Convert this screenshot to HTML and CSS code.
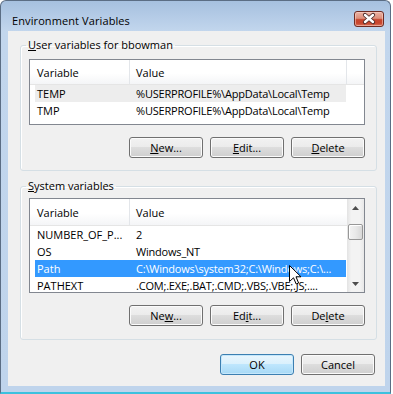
FILE: index.html
```html
<!DOCTYPE html>
<html>
<head>
<meta charset="utf-8">
<link rel="stylesheet" href="styles.css">
</head>
<body>
<div class="window">
  <div class="titlebar">
    <span class="title">Environment Variables</span>
    <div class="close">
      <svg width="30" height="16" viewBox="0 0 30 16">
        <path d="M11 4 L19 11 M19 4 L11 11" stroke="#4a2a28" stroke-width="4.2" stroke-linecap="round"/>
        <path d="M11 4 L19 11 M19 4 L11 11" stroke="#ffffff" stroke-width="2.4" stroke-linecap="round"/>
      </svg>
    </div>
  </div>
  <div class="client">
    <fieldset class="group group-user">
      <legend><u>U</u>ser variables for bbowman</legend>
      <div class="list list-user">
        <div class="list-main">
          <div class="list-head">
            <div class="hcell h1">Variable</div>
            <div class="hcell h2">Value</div>
            <div class="hfill"></div>
          </div>
          <div class="row row-hot"><span class="c1">TEMP</span><span class="c2">%USERPROFILE%\AppData\Local\Temp</span></div>
          <div class="row"><span class="c1">TMP</span><span class="c2">%USERPROFILE%\AppData\Local\Temp</span></div>
        </div>
      </div>
      <div class="buttons">
        <button class="btn"><u>N</u>ew...</button>
        <button class="btn"><u>E</u>dit...</button>
        <button class="btn"><u>D</u>elete</button>
      </div>
    </fieldset>
    <fieldset class="group group-system">
      <legend><u>S</u>ystem variables</legend>
      <div class="list list-system">
        <div class="list-main">
          <div class="list-head head-tall">
            <div class="hcell h1">Variable</div>
            <div class="hcell h2 h2-last">Value</div>
          </div>
          <div class="row"><span class="c1">NUMBER_OF_P...</span><span class="c2">2</span></div>
          <div class="row"><span class="c1">OS</span><span class="c2">Windows_NT</span></div>
          <div class="row row-selected"><span class="c1">Path</span><span class="c2">C:\Windows\system32;C:\Windows;C:\...</span></div>
          <div class="row"><span class="c1">PATHEXT</span><span class="c2">.COM;.EXE;.BAT;.CMD;.VBS;.VBE;.JS;....</span></div>
        </div>
        <div class="scrollbar">
          <div class="sb-arrow">
            <svg width="7" height="4" viewBox="0 0 7 4"><polygon points="0,4 3.5,0 7,4" fill="#4d4d4d"/></svg>
          </div>
          <div class="sb-thumb"></div>
          <div class="sb-track"></div>
          <div class="sb-arrow">
            <svg width="7" height="4" viewBox="0 0 7 4"><polygon points="0,0 7,0 3.5,4" fill="#4d4d4d"/></svg>
          </div>
        </div>
      </div>
      <div class="buttons">
        <button class="btn">Ne<u>w</u>...</button>
        <button class="btn">Ed<u>i</u>t...</button>
        <button class="btn">De<u>l</u>ete</button>
      </div>
    </fieldset>
    <div class="dialog-buttons">
      <button class="btn btn-default">OK</button>
      <button class="btn">Cancel</button>
    </div>
    <svg class="cursor" width="13" height="20" viewBox="0 0 13 20">
      <path d="M0.5 0.5 L0.5 16.5 L4.5 12.8 L7.2 19 L9.6 18 L7 11.8 L12 11.8 Z" fill="#ffffff" stroke="#000000" stroke-width="1" stroke-linejoin="miter"/>
    </svg>
  </div>
</div>
</body>
</html>
```

FILE: styles.css
```css
html, body {
  margin: 0;
  padding: 0;
  background: #ffffff;
}

body {
  font-family: "Segoe UI", "Open Sans", sans-serif;
  font-size: 11px;
  color: #000000;
}

.window {
  position: relative;
  width: 391px;
  height: 394px;
  box-sizing: border-box;
  border: 1px solid #5b6d84;
  border-bottom: 2px solid #3cc1de;
  border-radius: 6px 6px 0 0;
  background: linear-gradient(#a6c0df 0px, #c2d6ed 30px, #bfd4ec 100%);
  padding: 0 5px 6px 7px;
  display: flex;
  flex-direction: column;
}

.titlebar {
  height: 30px;
  flex: none;
  display: flex;
  align-items: flex-start;
  justify-content: space-between;
  padding-left: 4px;
}

.title {
  margin-top: 12px;
  font-size: 11px;
  line-height: 15px;
  letter-spacing: 0.1px;
}

.close {
  margin-top: 10px;
  margin-right: 1px;
  width: 30px;
  height: 16px;
  box-sizing: border-box;
  border: 1px solid #6e2b22;
  border-radius: 3px;
  background: linear-gradient(#eab2a4 0%, #dd8f7b 45%, #c6452d 55%, #c8462e 80%, #d9745c 100%);
  box-shadow: inset 0 0 0 1px rgba(255, 220, 210, 0.5);
  display: flex;
}

.close svg {
  margin: -1px;
}

.client {
  position: relative;
  flex: none;
  height: 355px;
  background: #f0f0f0;
  display: flex;
  flex-direction: column;
}

.group {
  margin: 0 8px 0 12px;
  border: 1px solid #d5dfe5;
  border-radius: 3px;
  min-width: 0;
  box-shadow: inset 1px 1px 0 #ffffff;
}

.group-user {
  margin-top: 7px;
  padding: 7px 11px 12px 8px;
}

.group-system {
  margin-top: 8px;
  padding: 5px 11px 13px 8px;
}

legend {
  padding: 0 2px;
  margin-left: -3px;
  line-height: 14px;
}

.list {
  box-sizing: border-box;
  border: 1px solid #828790;
  background: #ffffff;
  display: flex;
  overflow: hidden;
}

.list-user {
  height: 66px;
}

.list-system {
  height: 95px;
}

.list-main {
  flex: 1;
  min-width: 0;
}

.list-head {
  display: flex;
  height: 25px;
  box-sizing: border-box;
  border-bottom: 1px solid #e5e5e5;
  background: linear-gradient(#ffffff 0%, #ffffff 55%, #f4f5f7 100%);
}

.head-tall {
  height: 27px;
}

.hcell {
  box-sizing: border-box;
  border-right: 1px solid #e3e6ea;
  display: flex;
  align-items: center;
  white-space: nowrap;
}

.h1 {
  width: 100px;
  padding-left: 7px;
}

.h2 {
  width: 217px;
  padding-left: 6px;
}

.h2-last {
  flex: 1;
  width: auto;
  border-right: none;
}

.hfill {
  flex: 1;
}

.row {
  display: flex;
  height: 17px;
  line-height: 17px;
  margin-left: 5px;
  width: 311px;
  white-space: nowrap;
}

.row-hot {
  background: #ededed;
}

.row-selected {
  background: #3399ff;
  color: #ffffff;
}

.c1 {
  width: 94px;
  flex: none;
  box-sizing: border-box;
  padding-left: 2px;
  overflow: hidden;
}

.c2 {
  flex: 1;
  padding-left: 7px;
  overflow: hidden;
  letter-spacing: -0.2px;
}

.scrollbar {
  width: 17px;
  flex: none;
  display: flex;
  flex-direction: column;
  align-items: center;
  background: linear-gradient(90deg, #e3e3e3 0%, #f3f3f3 25%, #f3f3f3 75%, #e8e8e8 100%);
}

.sb-arrow {
  height: 17px;
  width: 17px;
  flex: none;
  display: flex;
  align-items: center;
  justify-content: center;
}

.sb-thumb {
  margin-top: 8px;
  width: 15px;
  height: 16px;
  flex: none;
  box-sizing: border-box;
  border: 1px solid #979797;
  border-radius: 2px;
  background: linear-gradient(90deg, #f3f3f3 0%, #e9e9e9 50%, #d8d8d8 100%);
  box-shadow: inset 1px 1px 0 #ffffff;
}

.sb-track {
  flex: 1;
}

.buttons {
  display: flex;
  justify-content: flex-end;
  gap: 7px;
  margin-top: 12px;
}

.btn {
  width: 74px;
  height: 21px;
  padding: 0;
  box-sizing: border-box;
  font-family: inherit;
  font-size: 11px;
  color: #000000;
  border: 1px solid #707070;
  border-radius: 3px;
  background: linear-gradient(#f2f2f2 0%, #ebebeb 50%, #dddddd 50%, #cfcfcf 100%);
  box-shadow: inset 0 0 0 1px #fbfbfb;
  line-height: 17px;
}

.btn-default {
  border-color: #3c7fb1;
  background: linear-gradient(#eaf6fd 0%, #d9f0fc 50%, #bee6fd 50%, #a7d9f5 100%);
  box-shadow: inset 0 0 0 1px #c5e7fb;
}

.dialog-buttons {
  display: flex;
  justify-content: flex-end;
  gap: 7px;
  margin-top: 14px;
  margin-right: 10px;
}

.cursor {
  position: absolute;
  left: 281px;
  top: 234px;
}
```
